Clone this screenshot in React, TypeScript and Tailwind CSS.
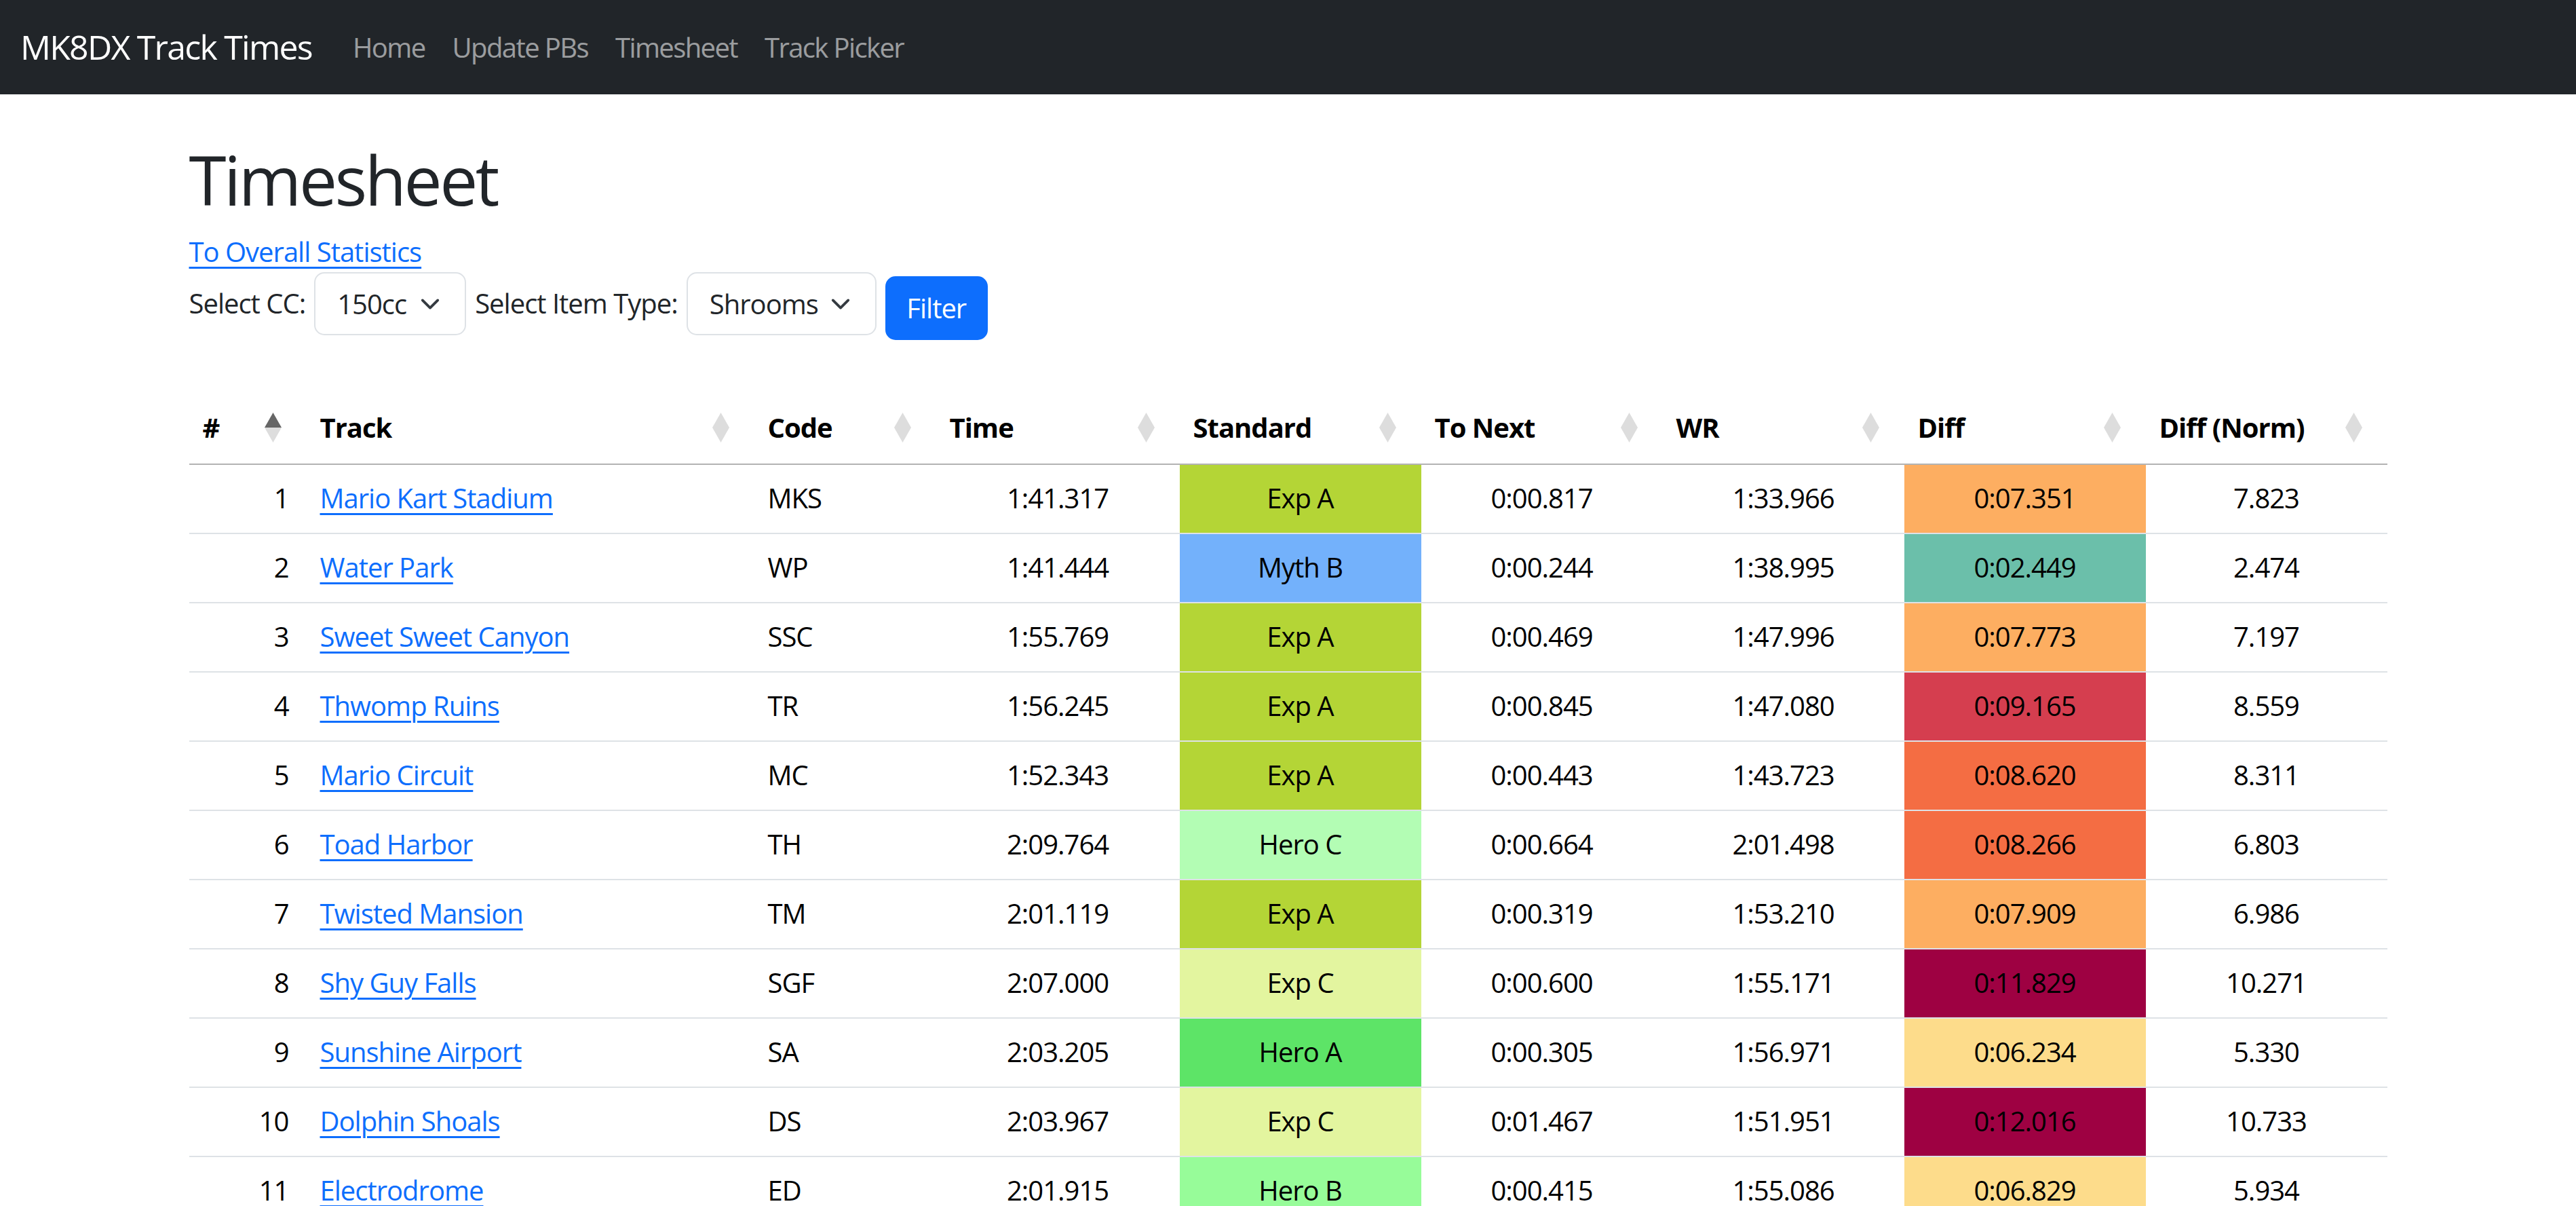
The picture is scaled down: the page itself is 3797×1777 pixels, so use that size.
import React from "react";

type Row = {
  n: number;
  track: string;
  code: string;
  time: string;
  std: string;
  toNext: string;
  wr: string;
  diff: string;
  norm: string;
};

const rows: Row[] = [
  { n: 1, track: "Mario Kart Stadium", code: "MKS", time: "1:41.317", std: "Exp A", toNext: "0:00.817", wr: "1:33.966", diff: "0:07.351", norm: "7.823" },
  { n: 2, track: "Water Park", code: "WP", time: "1:41.444", std: "Myth B", toNext: "0:00.244", wr: "1:38.995", diff: "0:02.449", norm: "2.474" },
  { n: 3, track: "Sweet Sweet Canyon", code: "SSC", time: "1:55.769", std: "Exp A", toNext: "0:00.469", wr: "1:47.996", diff: "0:07.773", norm: "7.197" },
  { n: 4, track: "Thwomp Ruins", code: "TR", time: "1:56.245", std: "Exp A", toNext: "0:00.845", wr: "1:47.080", diff: "0:09.165", norm: "8.559" },
  { n: 5, track: "Mario Circuit", code: "MC", time: "1:52.343", std: "Exp A", toNext: "0:00.443", wr: "1:43.723", diff: "0:08.620", norm: "8.311" },
  { n: 6, track: "Toad Harbor", code: "TH", time: "2:09.764", std: "Hero C", toNext: "0:00.664", wr: "2:01.498", diff: "0:08.266", norm: "6.803" },
  { n: 7, track: "Twisted Mansion", code: "TM", time: "2:01.119", std: "Exp A", toNext: "0:00.319", wr: "1:53.210", diff: "0:07.909", norm: "6.986" },
  { n: 8, track: "Shy Guy Falls", code: "SGF", time: "2:07.000", std: "Exp C", toNext: "0:00.600", wr: "1:55.171", diff: "0:11.829", norm: "10.271" },
  { n: 9, track: "Sunshine Airport", code: "SA", time: "2:03.205", std: "Hero A", toNext: "0:00.305", wr: "1:56.971", diff: "0:06.234", norm: "5.330" },
  { n: 10, track: "Dolphin Shoals", code: "DS", time: "2:03.967", std: "Exp C", toNext: "0:01.467", wr: "1:51.951", diff: "0:12.016", norm: "10.733" },
  { n: 11, track: "Electrodrome", code: "ED", time: "2:01.915", std: "Hero B", toNext: "0:00.415", wr: "1:55.086", diff: "0:06.829", norm: "5.934" },
];

const stdBg: Record<string, string> = {
  "Exp A": "bg-[#b4d536]",
  "Myth B": "bg-[#73b1fb]",
  "Hero C": "bg-[#b3fdb4]",
  "Exp C": "bg-[#e3f59f]",
  "Hero A": "bg-[#5de467]",
  "Hero B": "bg-[#97fc99]",
};

function diffBg(d: string): string {
  const v = parseFloat(d.split(":")[1]);
  if (v >= 11) return "bg-[#9e0142]";
  if (v >= 9) return "bg-[#d53e4f]";
  if (v >= 8) return "bg-[#f46d43]";
  if (v >= 7) return "bg-[#fdae61]";
  if (v >= 5) return "bg-[#fddc8b]";
  return "bg-[#6bbfaa]";
}

const grid =
  "grid grid-cols-[173px_660px_268px_359px_356px_356px_356px_356px_356px]";

function SortIcon({ active }: { active?: boolean }) {
  return (
    <svg width="25" height="44" viewBox="0 0 25 44" className="shrink-0">
      <polygon points="0,22 12.5,0 25,22" fill={active ? "#666666" : "#dddddd"} />
      <polygon points="0,22 25,22 12.5,44" fill="#dddddd" />
    </svg>
  );
}

function Th({ label, active }: { label: string; active?: boolean }) {
  return (
    <div className="flex items-center justify-between pl-[20px] pr-[37px] pt-[20px] pb-[23px] leading-[60px] font-bold">
      <span>{label}</span>
      <SortIcon active={active} />
    </div>
  );
}

function Select({ value, width }: { value: string; width: string }) {
  return (
    <div
      className={`flex h-[93px] ${width} items-center justify-between rounded-[15px] border-2 border-[#dee2e6] bg-white pl-[32px] pr-[36px] text-[#212529]`}
    >
      <span>{value}</span>
      <svg width="30" height="30" viewBox="0 0 16 16">
        <path
          d="m2 5 6 6 6-6"
          fill="none"
          stroke="#343a40"
          strokeWidth="2"
          strokeLinecap="round"
          strokeLinejoin="round"
        />
      </svg>
    </div>
  );
}

export default function App() {
  return (
    <div
      className="h-[1777px] overflow-hidden bg-white text-[40px] leading-[60px] tracking-[-0.025em] text-[#212529]"
      style={{ fontFamily: '"Segoe UI", "Open Sans", "Noto Sans", sans-serif' }}
    >
      <nav className="flex h-[139px] items-center bg-[#212529] px-[30px]">
        <span className="mr-[40px] text-[50px] leading-[75px] tracking-[-0.035em] text-white">
          MK8DX Track Times
        </span>
        <div className="flex tracking-[-0.04em] text-white/55">
          <span className="px-[20px]">Home</span>
          <span className="px-[20px]">Update PBs</span>
          <span className="px-[20px]">Timesheet</span>
          <span className="px-[20px]">Track Picker</span>
        </div>
      </nav>

      <main className="mx-auto w-[3300px] px-[30px]">
        <h1 className="mt-[65px] mb-[17px] text-[100px] font-normal leading-[120px] tracking-[-0.035em]">
          Timesheet
        </h1>
        <div>
          <a className="text-[#0d6efd] underline decoration-[2.5px] underline-offset-[7px]" href="#">
            To Overall Statistics
          </a>
        </div>
        <div className="flex items-start gap-[13px]">
          <span className="mt-[16px] whitespace-nowrap">Select CC:</span>
          <Select value="150cc" width="w-[224px]" />
          <span className="mt-[16px] whitespace-nowrap">Select Item Type:</span>
          <Select value="Shrooms" width="w-[280px]" />
          <button className="mt-[6px] h-[94px] w-[151px] rounded-[15px] bg-[#0d6efd] text-center text-white">
            Filter
          </button>
        </div>

        <div className="mt-[79px] text-black">
          <div className={`${grid} border-b-2 border-[#b3b3b3]`}>
            <Th label="#" active />
            <Th label="Track" />
            <Th label="Code" />
            <Th label="Time" />
            <Th label="Standard" />
            <Th label="To Next" />
            <Th label="WR" />
            <Th label="Diff" />
            <Th label="Diff (Norm)" />
          </div>
          {rows.map((r) => (
            <div key={r.n} className={`${grid} h-[102px] border-b-2 border-[#dee2e6]`}>
              <div className="pt-[19px] pr-[26px] text-right">{r.n}</div>
              <div className="pt-[19px] pl-[20px]">
                <a href="#" className="text-[#0d6efd] underline decoration-[2.5px] underline-offset-[7px]">
                  {r.track}
                </a>
              </div>
              <div className="pt-[19px] pl-[20px]">{r.code}</div>
              <div className="pt-[19px] text-center">{r.time}</div>
              <div className={`pt-[19px] text-center ${stdBg[r.std]}`}>{r.std}</div>
              <div className="pt-[19px] text-center">{r.toNext}</div>
              <div className="pt-[19px] text-center">{r.wr}</div>
              <div className={`pt-[19px] text-center ${diffBg(r.diff)}`}>{r.diff}</div>
              <div className="pt-[19px] text-center">{r.norm}</div>
            </div>
          ))}
        </div>
      </main>
    </div>
  );
}
